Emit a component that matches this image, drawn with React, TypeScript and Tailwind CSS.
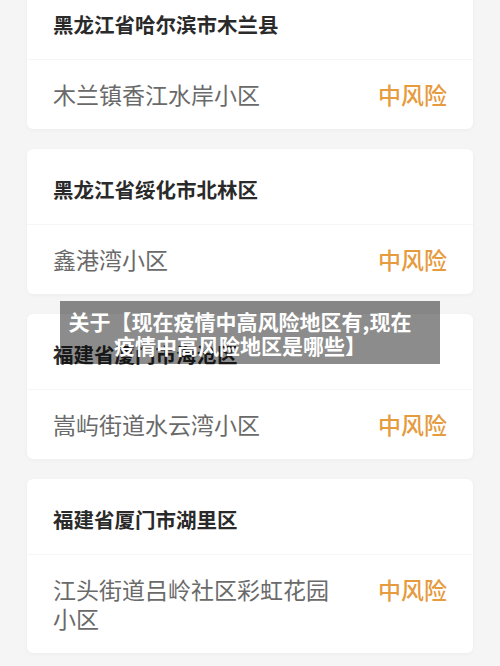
const areas = [
  { city: "黑龙江省哈尔滨市木兰县", place: "木兰镇香江水岸小区", level: "中风险" },
  { city: "黑龙江省绥化市北林区", place: "鑫港湾小区", level: "中风险" },
  { city: "福建省厦门市海沧区", place: "嵩屿街道水云湾小区", level: "中风险" },
  { city: "福建省厦门市湖里区", place: "江头街道吕岭社区彩虹花园小区", level: "中风险" }
] as const;

function AreaCard({ city, place, level }: { city: string; place: string; level: string }) {
  return (
    <div className="rounded-md bg-white shadow-[0_1px_5px_rgba(0,0,0,0.04)]">
      <div className="flex h-[75px] items-center px-[26px] pt-[6px]">
        <p className="text-[20.5px] font-bold text-[#2a2a2a]">{city}</p>
      </div>
      <div className="flex items-start justify-between border-t border-[#f6f6f6] px-[26px] pb-[20px] pt-[20px]">
        <p className="w-[282px] text-[23px] leading-[29px] text-[#6a6a6a]">{place}</p>
        <span className="text-[23px] font-medium leading-[29px] text-[#e59b3e]">{level}</span>
      </div>
    </div>
  );
}

export default function App() {
  return (
    <div
      className="relative h-[666px] w-[500px] overflow-hidden bg-[#f5f5f5]"
      style={{ fontFamily: '"Noto Sans CJK SC", "Noto Sans", sans-serif' }}
    >
      <div className="-mt-[16px] flex flex-col gap-5 px-[27px]">
        {areas.map((a) => (
          <AreaCard key={a.city} city={a.city} place={a.place} level={a.level} />
        ))}
      </div>

      <div className="absolute left-[60px] top-[301px] flex h-[63px] w-[380px] items-center justify-center bg-black/45 pl-[6px] pr-[26px]">
        <p className="text-center text-[21px] font-bold leading-[24px] text-white">
          关于【现在疫情中高风险地区有,现在疫情中高风险地区是哪些】
        </p>
      </div>
    </div>
  );
}
